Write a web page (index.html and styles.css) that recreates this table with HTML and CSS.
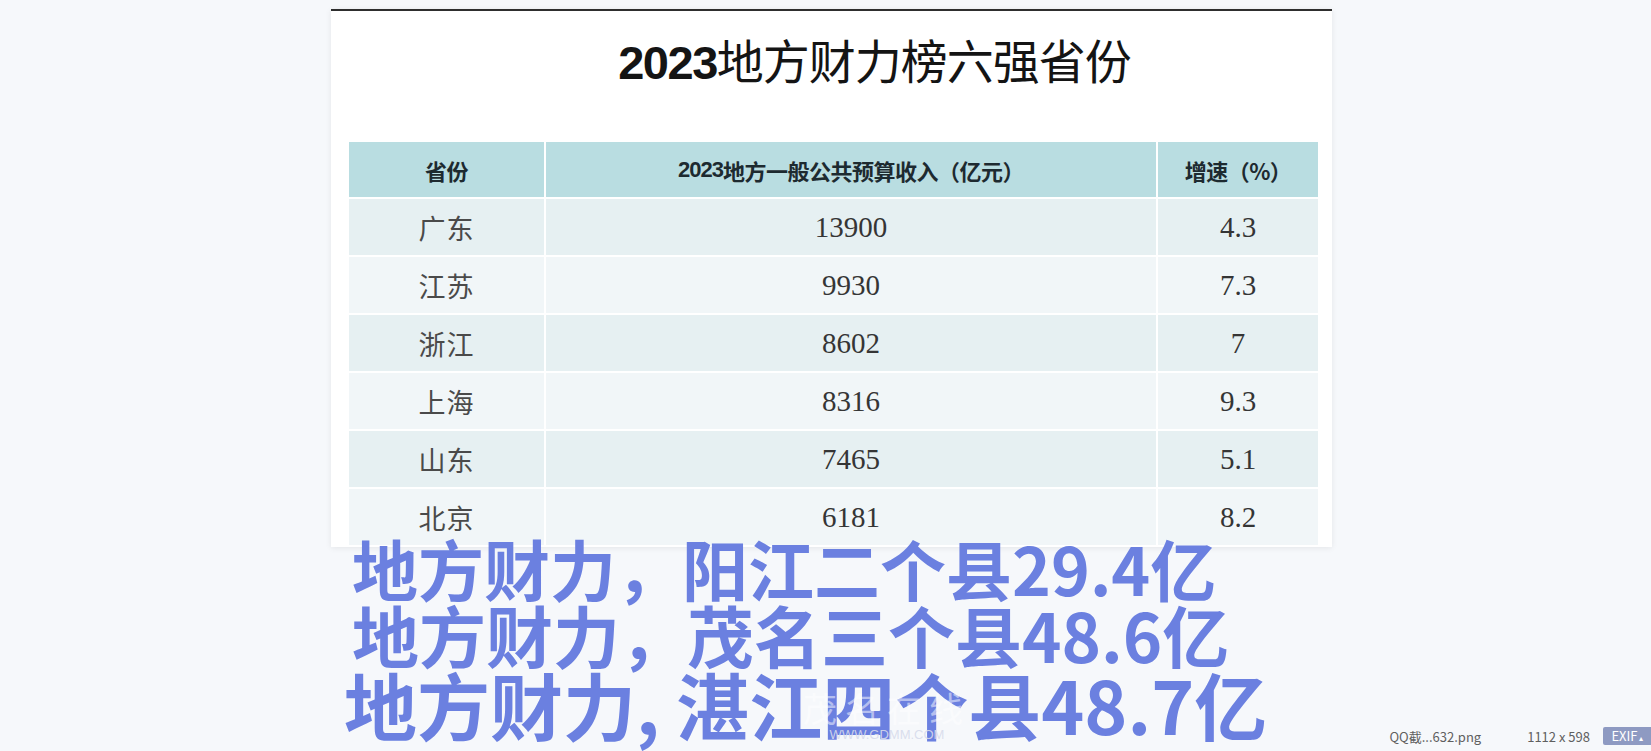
FILE: index.html
```html
<!DOCTYPE html>
<html lang="zh-CN">
<head>
<meta charset="utf-8">
<title>QQ截图20240101632.png</title>
<link rel="stylesheet" href="styles.css">
</head>
<body>
<div class="viewer">
  <div class="photo">
    <h1 class="title"><span class="num">2023</span>地方财力榜六强省份</h1>
    <div class="table">
      <div class="th">省份</div>
      <div class="th"><span class="num">2023</span>地方一般公共预算收入（亿元）</div>
      <div class="th">增速（%）</div>

      <div class="td name odd">广东</div>
      <div class="td val odd">13900</div>
      <div class="td val odd">4.3</div>

      <div class="td name even">江苏</div>
      <div class="td val even">9930</div>
      <div class="td val even">7.3</div>

      <div class="td name odd">浙江</div>
      <div class="td val odd">8602</div>
      <div class="td val odd">7</div>

      <div class="td name even">上海</div>
      <div class="td val even">8316</div>
      <div class="td val even">9.3</div>

      <div class="td name odd">山东</div>
      <div class="td val odd">7465</div>
      <div class="td val odd">5.1</div>

      <div class="td name even">北京</div>
      <div class="td val even">6181</div>
      <div class="td val even">8.2</div>
    </div>
  </div>

  <div class="captions">
    <div class="line l1">地方财力，阳江二个县29.4亿</div>
    <div class="line l2">地方财力，茂名三个县48.6亿</div>
    <div class="line l3">地方财力, 湛江四个县48.7亿</div>
    <div class="watermark">
      <span class="wm-logo">茂名在线</span>
      <span class="wm-url">WWW.GDMM.COM</span>
    </div>
  </div>

  <div class="statusbar">
    <span class="fname">QQ截...632.png</span>
    <span class="dims">1112 x 598</span>
    <span class="exif">EXIF<span class="caret">▴</span></span>
  </div>
</div>
</body>
</html>
```
FILE: styles.css
```css
html, body {
  margin: 0;
  padding: 0;
}
body {
  background: #f6f8fb;
  width: 1651px;
  height: 751px;
  overflow: hidden;
  font-family: "Noto Sans CJK SC", "Noto Sans", sans-serif;
}
.viewer {
  position: relative;
  width: 1651px;
  height: 751px;
  display: flex;
  flex-direction: column;
}
.photo {
  margin-top: 9px;
  margin-left: 331px;
  width: 1001px;
  height: 536px;
  background: #ffffff;
  border-top: 2px solid #2e2e2e;
  box-shadow: 0 1px 6px rgba(0, 0, 0, 0.08);
  display: flex;
  flex-direction: column;
}
.title {
  margin: 18px 0 0 0;
  padding-left: 86px;
  height: 60px;
  line-height: 60px;
  font-size: 47px;
  font-weight: 400;
  color: #141414;
  text-align: center;
  letter-spacing: -1px;
}
.title .num {
  font-family: "Liberation Sans", Arial, sans-serif;
  font-weight: 700;
  letter-spacing: -1.5px;
}
.table {
  margin: 53px 0 0 18px;
  display: grid;
  grid-template-columns: 195px 610px 160px;
  grid-template-rows: 55px repeat(6, 56px);
  gap: 2px;
  width: 969px;
}
.th {
  background: #b9dde1;
  color: #1d2a30;
  font-weight: 700;
  font-size: 22px;
  display: flex;
  align-items: center;
  justify-content: center;
  letter-spacing: -0.5px;
}
.th .num {
  font-family: "Liberation Sans", Arial, sans-serif;
  font-weight: 700;
  letter-spacing: -1px;
}
.td {
  display: flex;
  align-items: center;
  justify-content: center;
  color: #3a3a3a;
}
.td.odd { background: #e6f0f2; }
.td.even { background: #f1f6f8; }
.td.name {
  font-size: 27px;
  font-weight: 400;
  color: #4a4a4a;
  letter-spacing: 1px;
}
.td.val {
  font-family: "Liberation Serif", "Times New Roman", serif;
  font-size: 29px;
  color: #353535;
}
.captions {
  position: relative;
  margin-top: -14px;
  margin-left: 352px;
  color: #6b80e0;
  font-weight: 700;
  z-index: 2;
}
.line {
  line-height: 68px;
  white-space: nowrap;
}
.l1 { font-size: 66px; }
.l2 { font-size: 67px; margin-top: -1px; }
.l3 { font-size: 73px; margin-left: -8px; line-height: 70px; }
.watermark {
  position: absolute;
  left: 385px;
  top: 156px;
  width: 300px;
  display: flex;
  flex-direction: column;
  align-items: center;
  color: rgba(255, 255, 255, 0.5);
  font-weight: 400;
  pointer-events: none;
}
.wm-logo {
  font-size: 34px;
  line-height: 38px;
  letter-spacing: 8px;
}
.wm-url {
  font-family: "Liberation Sans", Arial, sans-serif;
  font-size: 13px;
  line-height: 15px;
  color: rgba(215, 219, 235, 0.9);
}
.statusbar {
  position: absolute;
  right: 0;
  bottom: 6px;
  display: flex;
  align-items: center;
  height: 18px;
  font-size: 13px;
  color: #5f5f5f;
  font-family: "Noto Sans CJK SC", "Noto Sans", sans-serif;
}
.fname { margin-right: 46px; }
.dims { margin-right: 13px; }
.exif {
  background: #8e9ac2;
  color: #ffffff;
  width: 48px;
  height: 18px;
  line-height: 18px;
  text-align: center;
  border-radius: 2px 0 0 2px;
  font-size: 13px;
}
.caret { font-size: 8px; margin-left: 1px; }
```
